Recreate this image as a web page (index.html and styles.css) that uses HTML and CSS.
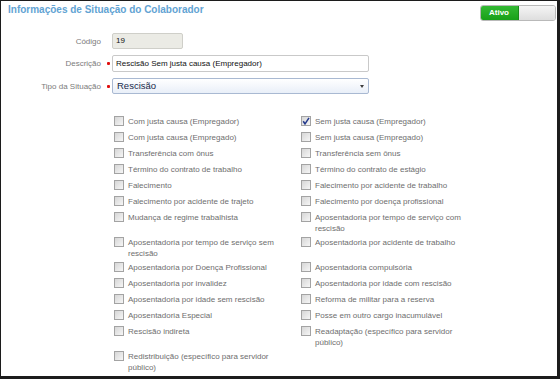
FILE: index.html
```html
<!DOCTYPE html>
<html lang="pt">
<head>
<meta charset="utf-8">
<link rel="stylesheet" href="styles.css">
</head>
<body>
<div class="window">
  <div class="header">
    <div class="title">Informações de Situação do Colaborador</div>
    <div class="toggle"><span class="on">Ativo</span><span class="off"></span></div>
  </div>
  <div class="form">
    <div class="field f1">
      <div class="lbl">Código</div><div class="req"></div>
      <div class="input code">19</div>
    </div>
    <div class="field f2">
      <div class="lbl">Descrição</div><div class="req"><span class="dot"></span></div>
      <div class="input desc">Rescisão Sem justa causa (Empregador)</div>
    </div>
    <div class="field f3">
      <div class="lbl">Tipo da Situação</div><div class="req"><span class="dot"></span></div>
      <div class="select">Rescisão<span class="arrow"></span></div>
    </div>
  </div>
  <div class="opts">
    <div class="opt"><span class="cb"></span><span class="txt">Com justa causa (Empregador)</span></div>
    <div class="opt"><span class="cb checked"><svg width="10" height="10" viewBox="0 0 10 10"><path d="M2.2 5.2 L4 7.8 L8 1.8" fill="none" stroke="#23398c" stroke-width="1.5"/></svg></span><span class="txt">Sem justa causa (Empregador)</span></div>
    <div class="opt"><span class="cb"></span><span class="txt">Com justa causa (Empregado)</span></div>
    <div class="opt"><span class="cb"></span><span class="txt">Sem justa causa (Empregado)</span></div>
    <div class="opt"><span class="cb"></span><span class="txt">Transferência com ônus</span></div>
    <div class="opt"><span class="cb"></span><span class="txt">Transferência sem ônus</span></div>
    <div class="opt"><span class="cb"></span><span class="txt">Término do contrato de trabalho</span></div>
    <div class="opt"><span class="cb"></span><span class="txt">Término do contrato de estágio</span></div>
    <div class="opt"><span class="cb"></span><span class="txt">Falecimento</span></div>
    <div class="opt"><span class="cb"></span><span class="txt">Falecimento por acidente de trabalho</span></div>
    <div class="opt"><span class="cb"></span><span class="txt">Falecimento por acidente de trajeto</span></div>
    <div class="opt"><span class="cb"></span><span class="txt">Falecimento por doença profissional</span></div>
    <div class="opt"><span class="cb"></span><span class="txt">Mudança de regime trabalhista</span></div>
    <div class="opt"><span class="cb"></span><span class="txt">Aposentadoria por tempo de serviço com rescisão</span></div>
    <div class="opt"><span class="cb"></span><span class="txt">Aposentadoria por tempo de serviço sem rescisão</span></div>
    <div class="opt"><span class="cb"></span><span class="txt">Aposentadoria por acidente de trabalho</span></div>
    <div class="opt"><span class="cb"></span><span class="txt">Aposentadoria por Doença Profissional</span></div>
    <div class="opt"><span class="cb"></span><span class="txt">Aposentadoria compulsória</span></div>
    <div class="opt"><span class="cb"></span><span class="txt">Aposentadoria por invalidez</span></div>
    <div class="opt"><span class="cb"></span><span class="txt">Aposentadoria por idade com rescisão</span></div>
    <div class="opt"><span class="cb"></span><span class="txt">Aposentadoria por idade sem rescisão</span></div>
    <div class="opt"><span class="cb"></span><span class="txt">Reforma de militar para a reserva</span></div>
    <div class="opt"><span class="cb"></span><span class="txt">Aposentadoria Especial</span></div>
    <div class="opt"><span class="cb"></span><span class="txt">Posse em outro cargo inacumulável</span></div>
    <div class="opt"><span class="cb"></span><span class="txt">Rescisão indireta</span></div>
    <div class="opt"><span class="cb"></span><span class="txt">Readaptação (específico para servidor público)</span></div>
    <div class="opt"><span class="cb"></span><span class="txt">Redistribuição (específico para servidor público)</span></div>
  </div>
</div>
</body>
</html>
```
FILE: styles.css
```css
html, body {
  margin: 0;
  padding: 0;
  background: #fff;
}
body {
  font-family: "Liberation Sans", Arial, sans-serif;
  font-size: 8px;
}
.window {
  box-sizing: border-box;
  width: 560px;
  height: 379px;
  border-style: solid;
  border-color: #1c1c1c;
  border-width: 1px 3px 3px 1px;
  overflow: hidden;
  background: #fff;
}
.header {
  display: flex;
  justify-content: space-between;
  align-items: flex-start;
  padding: 4px 1px 0 7px;
}
.title {
  font-size: 10px;
  font-weight: bold;
  line-height: 12px;
  color: #62a3d3;
  margin-top: -1px;
}
.toggle {
  display: flex;
  width: 76px;
  height: 16px;
  box-sizing: border-box;
  border: 1px solid #b9b9b9;
  border-radius: 3px;
  overflow: hidden;
}
.toggle .on {
  width: 38px;
  background: linear-gradient(#34b934, #18a018);
  color: #fff;
  font-weight: bold;
  font-size: 8px;
  line-height: 14px;
  padding-left: 8px;
  box-sizing: border-box;
  border-right: 1px solid #1a8a1a;
}
.toggle .off {
  flex: 1;
  background: linear-gradient(#f5f5f5, #dedede);
}
.form {
  margin-top: 12px;
  display: flex;
  flex-direction: column;
  gap: 6px;
}
.field {
  display: flex;
  align-items: center;
}
.lbl {
  width: 100px;
  text-align: right;
  color: #7b7b7b;
}
.req {
  width: 11px;
  display: flex;
  align-items: center;
}
.dot {
  width: 3px;
  height: 3px;
  margin-left: 6px;
  background: #e01010;
  border-radius: 1px;
}
.input {
  box-sizing: border-box;
  height: 16px;
  line-height: 14px;
  padding-left: 3px;
  border: 1px solid #cfcfc9;
  color: #111;
}
.input.code {
  width: 71px;
  background: #ebebe5;
  border-radius: 2px;
}
.input.desc {
  width: 257px;
  height: 17px;
  line-height: 15px;
  background: #fff;
  border-color: #c9c9c9;
  border-radius: 2px;
}
.select {
  position: relative;
  box-sizing: border-box;
  width: 257px;
  height: 16px;
  line-height: 14px;
  padding-left: 4px;
  font-size: 9.5px;
  color: #17284a;
  border: 1px solid #a9b9d2;
  border-radius: 2px;
  background: linear-gradient(#ffffff, #e9eff8);
}
.arrow {
  position: absolute;
  right: 4px;
  top: 6px;
  width: 0;
  height: 0;
  border-left: 2.5px solid transparent;
  border-right: 2.5px solid transparent;
  border-top: 3px solid #3d3d3d;
}
.opts {
  display: grid;
  grid-template-columns: 187px 187px;
  margin: 22px 0 0 113px;
  color: #6e6e6e;
}
.opt {
  display: flex;
  align-items: flex-start;
  min-height: 13px;
  padding-bottom: 3px;
  line-height: 11px;
}
.cb {
  flex: none;
  box-sizing: border-box;
  width: 10px;
  height: 10px;
  margin-right: 4px;
  border: 1px solid #a3a3a3;
  background: linear-gradient(135deg, #d6d6d6, #f6f6f6);
  position: relative;
}
.cb svg {
  position: absolute;
  left: -1px;
  top: -1px;
}
.txt {
  max-width: 160px;
}
```
